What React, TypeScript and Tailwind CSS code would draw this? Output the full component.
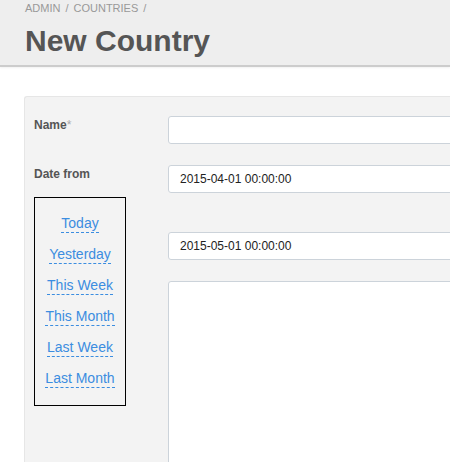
const ranges = ["Today", "Yesterday", "This Week", "This Month", "Last Week", "Last Month"]

const App = () => {
  return (
    <div className="h-[462px] bg-white font-['Liberation_Sans',Arial,sans-serif] overflow-hidden">
      <div className="h-[67px] bg-[#eeeeee] border-b-2 border-[#cccccc] shadow-[0_1px_2px_rgba(0,0,0,0.06)] pl-[25px] pt-[2px]">
        <div className="text-[11px] leading-[13px] uppercase text-[#999999]">
          <span>Admin</span>
          <span className="mx-[5px]">/</span>
          <span>Countries</span>
          <span className="mx-[5px]">/</span>
        </div>
        <h1 className="mt-[9px] text-[30px] leading-[34px] font-bold text-[#555555]">New Country</h1>
      </div>

      <div className="ml-[24px] mt-[29px] w-[500px] h-[366px] overflow-hidden bg-[#f3f3f3] border-t border-l border-[#e6e6e6] rounded-tl-[3px] pl-[9px] pt-[19px]">
        <div className="flex">
          <div className="w-[134px] shrink-0 pt-[2px] text-[12px] leading-[14px] font-bold text-[#555555]">
            Name<span className="text-[#aaaaaa] font-normal">*</span>
          </div>
          <div className="flex-1 h-[28px] bg-white border border-[#ccd3da] rounded-[3px]" />
        </div>

        <div className="flex mt-[21px]">
          <div className="w-[134px] shrink-0">
            <div className="pt-[2px] text-[12px] leading-[14px] font-bold text-[#555555]">Date from</div>
            <div className="mt-[16px] w-[92px] border border-black flex flex-col items-center pt-[17px] pb-[17px] gap-[13px]">
              {ranges.map((r) => (
                <span
                  key={r}
                  className="text-[14px] leading-[17px] text-[#3b8de0] border-b border-dashed border-[#3b8de0] cursor-pointer"
                >
                  {r}
                </span>
              ))}
            </div>
          </div>
          <div className="flex-1 flex flex-col">
            <div className="h-[28px] bg-white border border-[#ccd3da] rounded-[3px] pl-[11px] flex items-center text-[12px] text-[#222222]">
              2015-04-01 00:00:00
            </div>
            <div className="mt-[39px] h-[28px] bg-white border border-[#ccd3da] rounded-[3px] pl-[11px] flex items-center text-[12px] text-[#222222]">
              2015-05-01 00:00:00
            </div>
            <div className="mt-[21px] h-[200px] bg-white border border-[#ccd3da] rounded-[3px]" />
          </div>
        </div>
      </div>
    </div>
  )
}

export default App
